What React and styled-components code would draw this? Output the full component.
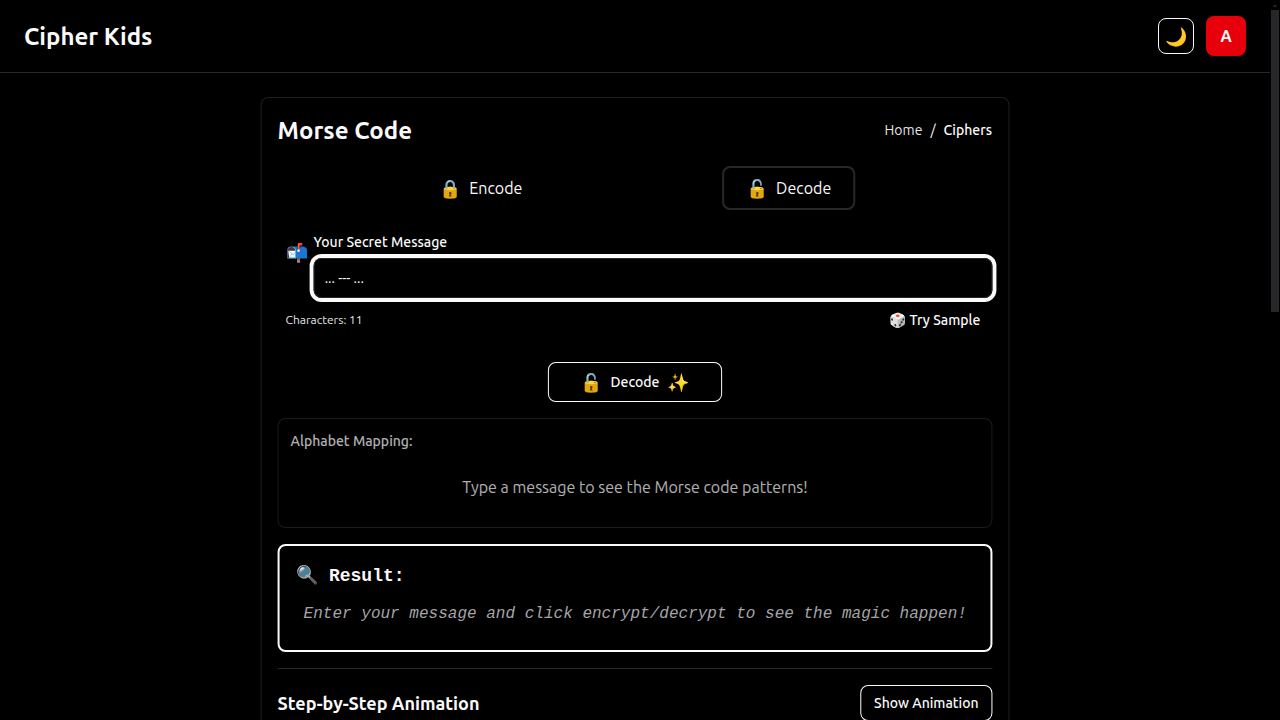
import React from "react";
import styled, { createGlobalStyle } from "styled-components";

const GlobalStyle = createGlobalStyle`
  *, *::before, *::after { box-sizing: border-box; }
  body {
    margin: 0;
    background: #000;
    color: #fafafa;
    font-family: Ubuntu, "Noto Sans", "Open Sans", sans-serif;
  }
`;

const Screen = styled.div`
  display: flex;
  height: 720px;
  overflow: hidden;
`;

const Page = styled.div`
  flex: 1;
  min-width: 0;
`;

const Label = styled.span`
  display: inline-block;
  white-space: nowrap;
  font-size: ${(p) => p.$size}px;
  line-height: ${(p) => p.$line || 20}px;
  font-weight: ${(p) => p.$weight || 400};
  color: ${(p) => p.$color || "#fafafa"};
`;

const Emoji = styled.span`
  display: inline-flex;
  justify-content: center;
  width: ${(p) => p.$width}px;
  padding-top: ${(p) => p.$drop || 0}px;
  font-family: "Noto Color Emoji", sans-serif;
  font-size: ${(p) => p.$size}px;
  line-height: 24px;
`;

const Header = styled.header`
  display: flex;
  align-items: center;
  justify-content: space-between;
  height: 73px;
  padding: 0 24px;
  border-bottom: 1px solid #27272a;
`;

const Brand = styled.div`
  padding-top: 2px;
`;

const HeaderActions = styled.div`
  display: flex;
  align-items: center;
  gap: 12px;
`;

const ThemeButton = styled.button`
  display: flex;
  align-items: center;
  justify-content: center;
  width: 36px;
  height: 36px;
  padding: 0 0 0 2px;
  border: 1px solid #fafafa;
  border-radius: 8px;
  background: #000;
`;

const Avatar = styled.div`
  display: flex;
  align-items: center;
  justify-content: center;
  width: 40px;
  height: 40px;
  border-radius: 8px;
  background: #e7000b;
`;

const Card = styled.main`
  width: 748px;
  height: 800px;
  margin: 24px auto 0;
  padding: 16px;
  border: 1px solid #1f1f22;
  border-radius: 8px;
  transform: scaleX(1.0012);
`;

const TitleRow = styled.div`
  display: flex;
  align-items: center;
  justify-content: space-between;
  height: 32px;
`;

const Title = styled.div`
  padding-top: 2px;
`;

const Breadcrumb = styled.nav`
  display: flex;
  gap: 8px;
  padding-right: 0.4px;
`;

const Tabs = styled.div`
  display: flex;
  gap: 176px;
  margin-top: 20px;
  padding-left: 138px;
`;

const Tab = styled.button`
  display: flex;
  align-items: center;
  justify-content: center;
  gap: 8px;
  width: ${(p) => p.$width}px;
  height: 44px;
  padding: 0;
  border: 2px solid ${(p) => (p.$active ? "#27272a" : "transparent")};
  border-radius: 8px;
  background: transparent;
  font-family: inherit;
`;

const MessageField = styled.div`
  display: flex;
  gap: 5px;
  margin-top: 22px;
  padding-left: 9px;
`;

const MailIcon = styled.div`
  width: 22px;
  padding-top: 9px;
`;

const FieldBody = styled.div`
  flex: 1;
`;

const FieldLabel = styled.div`
  height: 26px;
`;

const Input = styled.div`
  display: flex;
  align-items: center;
  height: 40px;
  padding-left: 10px;
  border: 1px solid #27272a;
  border-radius: 8px;
  box-shadow: 0 0 0 4px #fafafa;
`;

const FieldFooter = styled.div`
  display: flex;
  align-items: center;
  justify-content: space-between;
  height: 20px;
  margin-top: 12px;
  padding: 0 12px 0 8px;
`;

const SampleButton = styled.div`
  display: flex;
  align-items: center;
  gap: 3px;
`;

const DecodeButton = styled.button`
  display: flex;
  align-items: center;
  justify-content: center;
  gap: 8px;
  width: 174px;
  height: 40px;
  margin: 32px auto 0;
  padding: 0;
  border: 1px solid #fafafa;
  border-radius: 8px;
  background: #000;
  font-family: inherit;
`;

const MappingPanel = styled.section`
  height: 110px;
  margin-top: 16px;
  padding: 12px;
  border: 1px solid #27272a;
  border-radius: 8px;
  opacity: 0.7;
`;

const MappingHint = styled.div`
  margin-top: 24px;
  text-align: center;
`;

const ResultPanel = styled.section`
  height: 108px;
  margin-top: 16px;
  padding: 16px;
  border: 2px solid #fafafa;
  border-radius: 8px;
  font-family: "Liberation Mono", monospace;
`;

const ResultTitle = styled.div`
  display: flex;
  align-items: center;
  gap: 10.5px;
  height: 28px;
  padding-left: 0.8px;
  font-size: 18px;
  font-weight: 700;
`;

const SearchIcon = styled.div`
  display: flex;
  padding-bottom: 2px;
`;

const ResultHint = styled.div`
  margin-top: 12px;
  padding-left: 8px;
  font-size: 16px;
  line-height: 24px;
  font-style: italic;
  white-space: nowrap;
  color: #a5a5a9;
`;

const AnimationRow = styled.div`
  display: flex;
  justify-content: space-between;
  margin-top: 16px;
  padding-top: 16px;
  border-top: 1px solid #27272a;
`;

const AnimationButton = styled.button`
  display: flex;
  align-items: center;
  justify-content: center;
  width: 132px;
  height: 36px;
  padding: 0;
  border: 1px solid #fafafa;
  border-radius: 8px;
  background: #000;
  font-family: inherit;
`;

const Scrollbar = styled.div`
  display: flex;
  flex-direction: column;
  align-items: center;
  width: 10px;
  padding: 4px 1px 0;
`;

const ScrollArrow = styled.div`
  width: 4px;
  height: 3px;
  background: #27272a;
  clip-path: polygon(50% 0, 100% 100%, 0 100%);
`;

const ScrollThumb = styled.div`
  width: 8px;
  height: 302px;
  margin-top: 3px;
  background: #27272a;
`;

export default function App() {
  return (
    <>
      <GlobalStyle />
      <Screen>
        <Page>
          <Header>
            <Brand><Label $size={24} $line={32} $weight={600}>Cipher Kids</Label></Brand>
            <HeaderActions>
              <ThemeButton><Emoji $size={18} $width={24} $drop={2}>🌙</Emoji></ThemeButton>
              <Avatar><Label $size={16} $weight={600}>A</Label></Avatar>
            </HeaderActions>
          </Header>
          <Card>
            <TitleRow>
              <Title><Label $size={24} $line={32} $weight={600}>Morse Code</Label></Title>
              <Breadcrumb>
                <Label $size={14} $color="#e4e4e7">Home</Label>
                <Label $size={14}>/</Label>
                <Label $size={14} $weight={500}>Ciphers</Label>
              </Breadcrumb>
            </TitleRow>
            <Tabs>
              <Tab $width={130}>
                <Emoji $size={18} $width={22} $drop={1}>🔒</Emoji>
                <Label $size={16} $weight={400}>Encode</Label>
              </Tab>
              <Tab $width={133} $active>
                <Emoji $size={18} $width={22} $drop={2}>🔓</Emoji>
                <Label $size={16} $weight={400}>Decode</Label>
              </Tab>
            </Tabs>
            <MessageField>
              <MailIcon><Emoji $size={18} $width={22}>📬</Emoji></MailIcon>
              <FieldBody>
                <FieldLabel><Label $size={14} $weight={500}>Your Secret Message</Label></FieldLabel>
                <Input><Label $size={14}>... --- ...</Label></Input>
              </FieldBody>
            </MessageField>
            <FieldFooter>
              <Label $size={12} $color="#e4e4e7">Characters: 11</Label>
              <SampleButton>
                <Emoji $size={14} $width={17}>🎲</Emoji>
                <Label $size={14} $weight={500}>Try Sample</Label>
              </SampleButton>
            </FieldFooter>
            <DecodeButton>
              <Emoji $size={18} $width={22} $drop={2}>🔓</Emoji>
              <Label $size={14} $weight={500}>Decode</Label>
              <Emoji $size={18} $width={22} $drop={2}>✨</Emoji>
            </DecodeButton>
            <MappingPanel>
              <Label $size={14} $weight={500}>Alphabet Mapping:</Label>
              <MappingHint>
                <Label $size={16} $line={24}>
                  Type a message to see the Morse code patterns!
                </Label>
              </MappingHint>
            </MappingPanel>
            <ResultPanel>
              <ResultTitle>
                <SearchIcon><Emoji $size={18} $width={22}>🔍</Emoji></SearchIcon>
                Result:
              </ResultTitle>
              <ResultHint>Enter your message and click encrypt/decrypt to see the magic happen!</ResultHint>
            </ResultPanel>
            <AnimationRow>
              <Label $size={18} $line={36} $weight={600}>Step-by-Step Animation</Label>
              <AnimationButton><Label $size={14} $weight={500}>Show Animation</Label></AnimationButton>
            </AnimationRow>
          </Card>
        </Page>
        <Scrollbar>
          <ScrollArrow />
          <ScrollThumb />
        </Scrollbar>
      </Screen>
    </>
  );
}
